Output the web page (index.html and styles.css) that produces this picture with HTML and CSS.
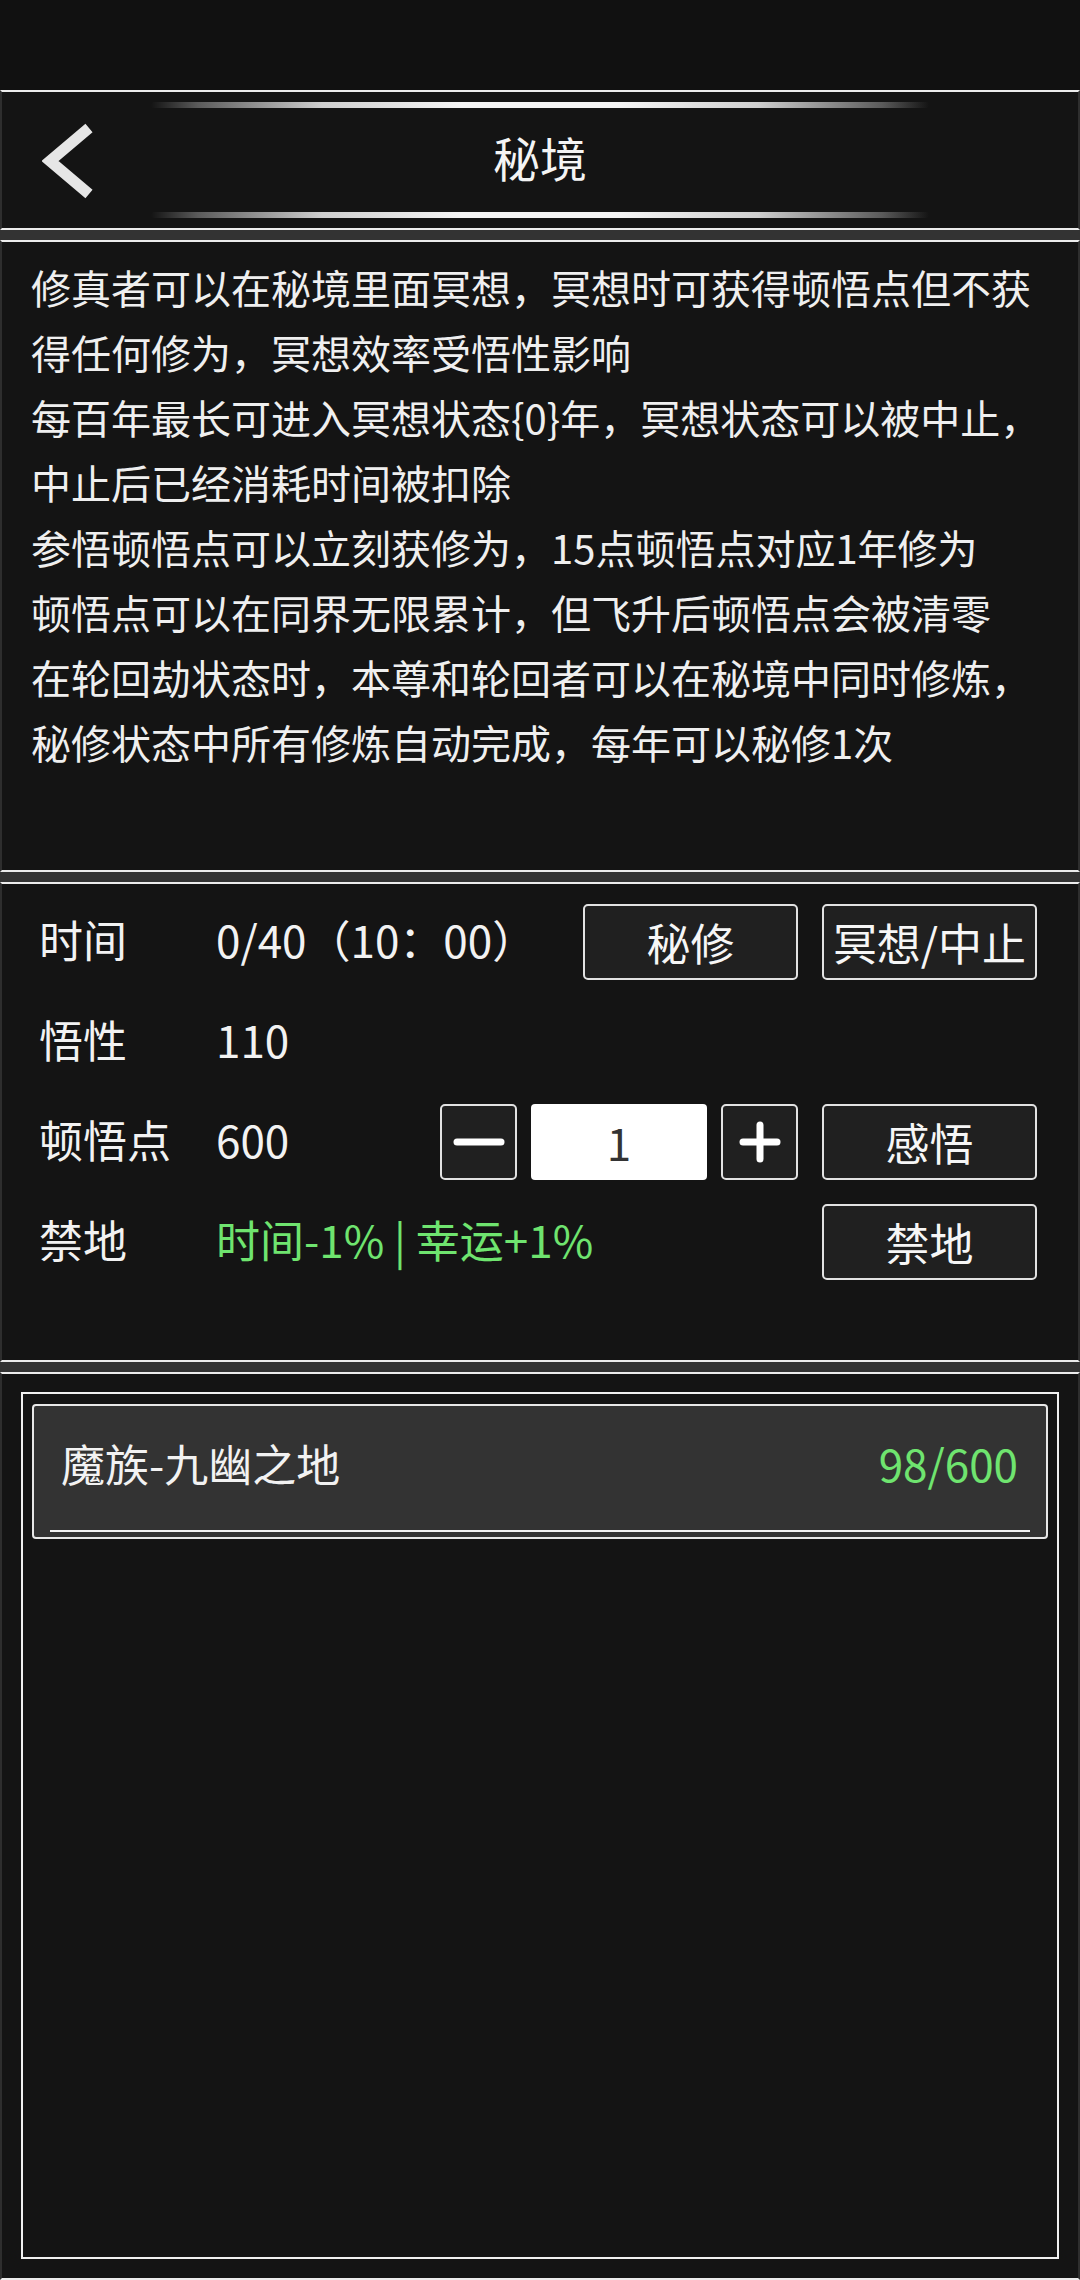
FILE: index.html
```html
<!doctype html>
<html lang="zh-CN">
  <head>
    <meta charset="UTF-8" />
    <meta name="viewport" content="width=device-width, initial-scale=1.0" />
    <title>秘境</title>
    <link rel="stylesheet" href="styles.css">
  </head>
  <body>
    <div class="status-bar"></div>

    <header class="panel header">
      <div class="glow-line"></div>
      <div class="header-row">
        <a class="back" href="#">
          <svg width="52" height="80" viewBox="0 0 52 80">
            <polyline points="47,8 8,41 47,74" fill="none" stroke="#e6e6e6" stroke-width="11" />
          </svg>
        </a>
        <h1 class="title">秘境</h1>
        <div></div>
      </div>
      <div class="glow-line"></div>
    </header>

    <div class="sep"></div>

    <section class="panel intro">
      <p>修真者可以在秘境里面冥想，冥想时可获得顿悟点但不获<br>得任何修为，冥想效率受悟性影响</p>
      <p>每百年最长可进入冥想状态{0}年，冥想状态可以被中止，<br>中止后已经消耗时间被扣除</p>
      <p>参悟顿悟点可以立刻获修为，15点顿悟点对应1年修为</p>
      <p>顿悟点可以在同界无限累计，但飞升后顿悟点会被清零</p>
      <p>在轮回劫状态时，本尊和轮回者可以在秘境中同时修炼，<br>秘修状态中所有修炼自动完成，每年可以秘修1次</p>
    </section>

    <div class="sep"></div>

    <section class="panel controls">
      <div class="row">
        <span class="label">时间</span>
        <span class="value">0/40（10：00）</span>
        <button class="btn">秘修</button>
        <button class="btn">冥想/中止</button>
      </div>
      <div class="row">
        <span class="label">悟性</span>
        <span class="value">110</span>
      </div>
      <div class="row">
        <span class="label">顿悟点</span>
        <span class="value">600</span>
        <div class="stepper">
          <button class="btn step-btn">
            <svg width="52" height="8" viewBox="0 0 52 8">
              <line x1="4" y1="4" x2="48" y2="4" stroke="#fff" stroke-width="7" stroke-linecap="round" />
            </svg>
          </button>
          <div class="step-input">1</div>
          <button class="btn step-btn">
            <svg width="42" height="42" viewBox="0 0 42 42">
              <line x1="4" y1="21" x2="38" y2="21" stroke="#fff" stroke-width="7" stroke-linecap="round" />
              <line x1="21" y1="4" x2="21" y2="38" stroke="#fff" stroke-width="7" stroke-linecap="round" />
            </svg>
          </button>
        </div>
        <button class="btn">感悟</button>
      </div>
      <div class="row">
        <span class="label">禁地</span>
        <span class="value green">时间-1% | 幸运+1%</span>
        <button class="btn">禁地</button>
      </div>
    </section>

    <div class="sep"></div>

    <section class="panel list-panel">
      <div class="list-box">
        <div class="item">
          <div class="item-row">
            <span class="item-name">魔族-九幽之地</span>
            <span class="item-count">98/600</span>
          </div>
          <div class="item-line"></div>
        </div>
      </div>
    </section>
  </body>
</html>
```

FILE: styles.css
```css
:root {
  --bg: #141414;
  --bar: #111111;
  --sep: #333333;
  --edge: #ececec;
  --side: #2e2e2e;
  --text: #f2f2f2;
  --green: #6fe46f;
  --btn-bg: #202020;
}

* {
  margin: 0;
  padding: 0;
  box-sizing: border-box;
}

body {
  width: 1080px;
  height: 2280px;
  overflow: hidden;
  background-color: var(--bg);
  color: var(--text);
  font-family: 'Noto Sans CJK SC', 'Noto Sans', sans-serif;
}

.status-bar {
  height: 90px;
  background-color: var(--bar);
}

.panel {
  background-color: var(--bg);
  border: 2px solid var(--edge);
  border-left-color: var(--side);
  border-right-color: var(--side);
}

.sep {
  height: 10px;
  background-color: var(--sep);
}

/* header */
.header {
  height: 140px;
  padding: 10px 0;
  display: flex;
  flex-direction: column;
  align-items: center;
}

.glow-line {
  width: 778px;
  height: 6px;
  border-radius: 3px;
  background: linear-gradient(90deg, rgba(255, 255, 255, 0) 0%, #5a5a5a 6%, #cfcfcf 22%, #f4f4f4 40%, #f4f4f4 60%, #cfcfcf 78%, #5a5a5a 94%, rgba(255, 255, 255, 0) 100%);
}

.header-row {
  flex: 1;
  width: 100%;
  display: grid;
  grid-template-columns: 1fr auto 1fr;
  align-items: center;
}

.back {
  display: flex;
  margin-left: 40px;
  justify-self: start;
}

.title {
  font-size: 47px;
  font-weight: 400;
  color: #f4f4f4;
  padding-bottom: 8px;
}

/* intro text */
.intro {
  height: 632px;
  padding: 13px 29px;
  font-size: 40px;
  line-height: 65px;
  color: #efefef;
  white-space: nowrap;
}

/* controls */
.controls {
  height: 480px;
  padding: 20px 41px 0 37px;
  display: flex;
  flex-direction: column;
  gap: 24px;
}

.row {
  height: 76px;
  display: flex;
  align-items: center;
  gap: 24px;
}

.label {
  width: 153px;
  font-size: 44px;
  white-space: nowrap;
  padding-bottom: 6px;
}

.value {
  flex: 1;
  font-size: 44px;
  white-space: nowrap;
  padding-bottom: 6px;
}

.green {
  color: var(--green);
}

.btn {
  width: 215px;
  height: 76px;
  display: flex;
  align-items: center;
  justify-content: center;
  background-color: var(--btn-bg);
  border: 2px solid #e2e2e2;
  border-radius: 5px;
  color: #f6f6f6;
  font-family: inherit;
  font-size: 44px;
  white-space: nowrap;
}

.stepper {
  display: flex;
  gap: 14px;
}

.step-btn {
  width: 77px;
}

.step-input {
  width: 176px;
  height: 76px;
  display: flex;
  align-items: center;
  justify-content: center;
  background-color: #ffffff;
  border-radius: 4px;
  color: #333;
  font-size: 44px;
}

/* list */
.list-panel {
  height: 908px;
  padding: 18px 19px 19px 19px;
}

.list-box {
  height: 100%;
  border: 2px solid #f0f0f0;
  padding: 10px 9px;
}

.item {
  height: 135px;
  background-color: #333333;
  border: 2px solid #e8e8e8;
  border-radius: 4px;
  padding: 0 16px;
}

.item-row {
  height: 124px;
  display: flex;
  align-items: center;
  justify-content: space-between;
  padding: 0 12px 10px 11px;
  font-size: 44px;
}

.item-count {
  color: var(--green);
}

.item-line {
  height: 2px;
  background-color: #f2f2f2;
}
```
